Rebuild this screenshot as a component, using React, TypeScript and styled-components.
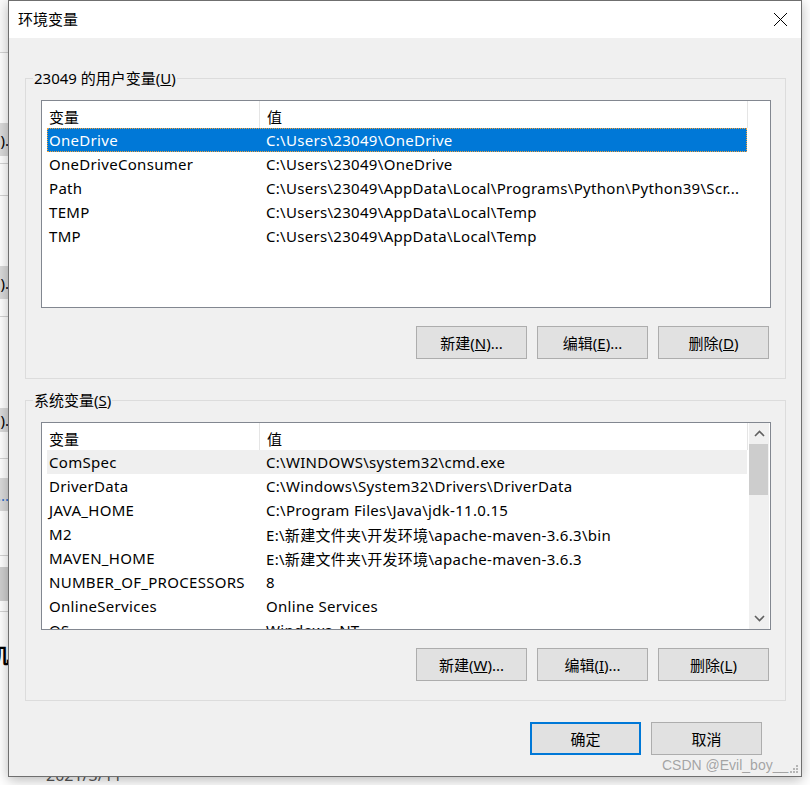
import React from "react";
import styled, { createGlobalStyle } from "styled-components";

const UI_FONT = `"Noto Sans", "Noto Sans CJK SC", sans-serif`;

const GlobalStyle = createGlobalStyle`
  html, body {
    margin: 0;
    padding: 0;
    background: #ffffff;
  }
  body {
    font-family: ${UI_FONT};
    font-size: 15px;
    color: #000;
  }
  * { box-sizing: border-box; }
`;

const Desktop = styled.div`
  position: relative;
  width: 810px;
  height: 785px;
  overflow: hidden;
  display: flex;
  align-items: flex-start;
  background: #ffffff;
`;

const BackStrip = styled.div`
  width: 8px;
  flex: none;
  height: 785px;
  display: flex;
  flex-direction: column;
  overflow: hidden;
  background: #ffffff;
`;

const StripPiece = styled.div<{ $h: number; $bg?: string; $line?: boolean }>`
  height: ${(p) => p.$h}px;
  flex: none;
  background: ${(p) => p.$bg || "#fbfbfb"};
  border-bottom: ${(p) => (p.$line ? "1px solid #d4d4d4" : "none")};
  display: flex;
  align-items: center;
  justify-content: flex-end;
  white-space: nowrap;
  font-size: 15px;
  color: #000;
  overflow: hidden;
`;

const StripGlyph = styled.span<{ $bold?: boolean; $blue?: boolean }>`
  font-weight: ${(p) => (p.$bold ? 700 : 400)};
  font-size: ${(p) => (p.$bold ? "21px" : "15px")};
  color: ${(p) => (p.$blue ? "#2a6ccf" : "#000")};
  margin-right: -1px;
`;

const BehindDate = styled.div`
  position: absolute;
  left: 46px;
  top: 764px;
  font-size: 16px;
  color: #555;
  z-index: 0;
`;

const Dialog = styled.div`
  position: relative;
  z-index: 1;
  width: 794px;
  height: 777px;
  flex: none;
  border: 1px solid #6f6f6f;
  background: #f0f0f0;
  box-shadow: 0 3px 12px rgba(0, 0, 0, 0.28);
  display: flex;
  flex-direction: column;
`;

const TitleBar = styled.div`
  height: 37px;
  flex: none;
  background: #ffffff;
  display: flex;
  align-items: center;
  justify-content: space-between;
  padding: 0 13px 0 9px;
`;

const Title = styled.div`
  font-size: 15px;
  line-height: 20px;
  margin-top: -1px;
`;

const Body = styled.div`
  display: flex;
  flex-direction: column;
  padding: 40px 15px 19px 16px;
`;

const GroupBox = styled.div<{ $gap?: number }>`
  border: 1px solid #dcdcdc;
  display: flex;
  flex-direction: column;
  padding: 0 14px 19px 15px;
  margin-bottom: ${(p) => p.$gap || 0}px;
`;

const Legend = styled.div`
  align-self: flex-start;
  margin-top: -11px;
  margin-left: -8px;
  padding: 0 1px;
  line-height: 20px;
  background: #f0f0f0;
  font-size: 15px;
`;

const ListView = styled.div`
  margin-top: 12px;
  height: 208px;
  border: 1px solid #828790;
  background: #ffffff;
  display: flex;
  overflow: hidden;
`;

const ListContent = styled.div`
  width: 706px;
  flex: none;
  display: flex;
  flex-direction: column;
  overflow: hidden;
`;

const Header = styled.div`
  height: 27px;
  flex: none;
  display: flex;
`;

const HeaderCell = styled.div<{ $w: number }>`
  width: ${(p) => p.$w}px;
  flex: none;
  border-right: 1px solid #e5e5e5;
  padding-left: 7px;
  padding-top: 3px;
  display: flex;
  align-items: center;
  font-size: 15px;
`;

const Row = styled.div<{ $state?: "selected" | "hover" }>`
  height: 24px;
  flex: none;
  width: 700px;
  margin-left: 5px;
  display: flex;
  align-items: center;
  white-space: nowrap;
  letter-spacing: 0.3px;
  background: ${(p) =>
    p.$state === "selected" ? "#0078d7" : p.$state === "hover" ? "#efefef" : "transparent"};
  color: ${(p) => (p.$state === "selected" ? "#ffffff" : "#000")};
  outline: ${(p) => (p.$state === "selected" ? "1px dotted #f3a13a" : "none")};
  outline-offset: -1px;
`;

const NameCell = styled.div`
  width: 212px;
  flex: none;
  padding-left: 2px;
  overflow: hidden;
`;

const ValueCell = styled.div`
  flex: none;
  padding-left: 7px;
`;

const ScrollBar = styled.div`
  width: 20px;
  flex: none;
  margin-left: 1px;
  background: #f0f0f0;
  display: flex;
  flex-direction: column;
`;

const ScrollArrow = styled.div`
  height: 21px;
  flex: none;
  display: flex;
  align-items: center;
  justify-content: center;
`;

const ScrollThumb = styled.div`
  height: 51px;
  flex: none;
  margin: 0 1px 0 0;
  background: #cdcdcd;
`;

const ScrollTrack = styled.div`
  flex: 1;
`;

const ButtonRow = styled.div<{ $top: number; $right: number }>`
  display: flex;
  justify-content: flex-end;
  gap: 10px;
  margin-top: ${(p) => p.$top}px;
  padding-right: ${(p) => p.$right}px;
`;

const Button = styled.div<{ $default?: boolean }>`
  width: 111px;
  height: 33px;
  flex: none;
  background: #e1e1e1;
  border: ${(p) => (p.$default ? "2px solid #0078d7" : "1px solid #adadad")};
  display: flex;
  align-items: center;
  justify-content: center;
  font-size: 15px;
  color: #000;
  white-space: nowrap;
`;

const Watermark = styled.div`
  position: absolute;
  left: 653px;
  top: 756px;
  font-family: "Liberation Sans", Arial, sans-serif;
  font-size: 14px;
  line-height: 16px;
  color: rgba(150, 150, 150, 0.85);
  white-space: nowrap;
  display: flex;
  align-items: flex-end;
  gap: 1px;
`;

const Chevron = ({ dir }: { dir: "up" | "down" }) => (
  <svg width="11" height="7" viewBox="0 0 11 7">
    <polyline
      points={dir === "up" ? "1,6 5.5,1.5 10,6" : "1,1 5.5,5.5 10,1"}
      fill="none"
      stroke="#606060"
      strokeWidth="1.6"
    />
  </svg>
);

const CloseIcon = () => (
  <svg width="15" height="15" viewBox="0 0 15 15">
    <line x1="1" y1="1" x2="14" y2="14" stroke="#000" strokeWidth="1" />
    <line x1="14" y1="1" x2="1" y2="14" stroke="#000" strokeWidth="1" />
  </svg>
);

const Grip = () => (
  <svg width="9" height="9" viewBox="0 0 9 9">
    {[
      [7, 1],
      [7, 4],
      [4, 4],
      [7, 7],
      [4, 7],
      [1, 7],
    ].map(([x, y], i) => (
      <rect key={i} x={x} y={y} width="2" height="2" fill="#b5b5b5" />
    ))}
  </svg>
);

type Item = { name: string; value: string; state?: "selected" | "hover" };

const userVars: Item[] = [
  { name: "OneDrive", value: "C:\\Users\\23049\\OneDrive", state: "selected" },
  { name: "OneDriveConsumer", value: "C:\\Users\\23049\\OneDrive" },
  { name: "Path", value: "C:\\Users\\23049\\AppData\\Local\\Programs\\Python\\Python39\\Scr..." },
  { name: "TEMP", value: "C:\\Users\\23049\\AppData\\Local\\Temp" },
  { name: "TMP", value: "C:\\Users\\23049\\AppData\\Local\\Temp" },
];

const sysVars: Item[] = [
  { name: "ComSpec", value: "C:\\WINDOWS\\system32\\cmd.exe", state: "hover" },
  { name: "DriverData", value: "C:\\Windows\\System32\\Drivers\\DriverData" },
  { name: "JAVA_HOME", value: "C:\\Program Files\\Java\\jdk-11.0.15" },
  { name: "M2", value: "E:\\新建文件夹\\开发环境\\apache-maven-3.6.3\\bin" },
  { name: "MAVEN_HOME", value: "E:\\新建文件夹\\开发环境\\apache-maven-3.6.3" },
  { name: "NUMBER_OF_PROCESSORS", value: "8" },
  { name: "OnlineServices", value: "Online Services" },
  { name: "OS", value: "Windows_NT" },
];

const VarList = ({ items, scroll }: { items: Item[]; scroll?: boolean }) => (
  <ListView>
    <ListContent>
      <Header>
        <HeaderCell $w={218}>变量</HeaderCell>
        <HeaderCell $w={488}>值</HeaderCell>
      </Header>
      {items.map((it) => (
        <Row key={it.name} $state={it.state}>
          <NameCell>{it.name}</NameCell>
          <ValueCell>{it.value}</ValueCell>
        </Row>
      ))}
    </ListContent>
    {scroll && (
      <ScrollBar>
        <ScrollArrow>
          <Chevron dir="up" />
        </ScrollArrow>
        <ScrollThumb />
        <ScrollTrack />
        <ScrollArrow>
          <Chevron dir="down" />
        </ScrollArrow>
      </ScrollBar>
    )}
  </ListView>
);

export default function App() {
  return (
    <>
      <GlobalStyle />
      <Desktop>
        <BackStrip>
          <StripPiece $h={53} $line />
          <StripPiece $h={70} $bg="#ffffff" />
          <StripPiece $h={33} $bg="#dadada">
            <StripGlyph>).</StripGlyph>
          </StripPiece>
          <StripPiece $h={8} $bg="#ffffff" $line />
          <StripPiece $h={32} $bg="#ffffff" $line />
          <StripPiece $h={70} $bg="#ffffff" />
          <StripPiece $h={33} $bg="#dadada">
            <StripGlyph>).</StripGlyph>
          </StripPiece>
          <StripPiece $h={18} $bg="#ffffff" $line />
          <StripPiece $h={91} $bg="#ffffff" />
          <StripPiece $h={24} $bg="#dadada">
            <StripGlyph>).</StripGlyph>
          </StripPiece>
          <StripPiece $h={27} $bg="#ffffff" $line />
          <StripPiece $h={19} $bg="#ffffff" />
          <StripPiece $h={33} $bg="#dadada">
            <StripGlyph $blue>....</StripGlyph>
          </StripPiece>
          <StripPiece $h={45} $bg="#ffffff" $line />
          <StripPiece $h={11} $bg="#ffffff" />
          <StripPiece $h={34} $bg="#cfcfcf" />
          <StripPiece $h={11} $bg="#ffffff" $line />
          <StripPiece $h={30} $bg="#ffffff" />
          <StripPiece $h={24} $bg="#ffffff">
            <StripGlyph $bold>机</StripGlyph>
          </StripPiece>
          <StripPiece $h={120} $bg="#ffffff" />
        </BackStrip>
        <BehindDate>2021/3/11</BehindDate>
        <Dialog>
          <TitleBar>
            <Title>环境变量</Title>
            <CloseIcon />
          </TitleBar>
          <Body>
            <GroupBox $gap={21}>
              <Legend>
                23049 的用户变量(<u>U</u>)
              </Legend>
              <VarList items={userVars} />
              <ButtonRow $top={18} $right={2}>
                <Button>
                  新建(<u>N</u>)...
                </Button>
                <Button>
                  编辑(<u>E</u>)...
                </Button>
                <Button>
                  删除(<u>D</u>)
                </Button>
              </ButtonRow>
            </GroupBox>
            <GroupBox>
              <Legend>
                系统变量(<u>S</u>)
              </Legend>
              <VarList items={sysVars} scroll />
              <ButtonRow $top={18} $right={2}>
                <Button>
                  新建(<u>W</u>)...
                </Button>
                <Button>
                  编辑(<u>I</u>)...
                </Button>
                <Button>
                  删除(<u>L</u>)
                </Button>
              </ButtonRow>
            </GroupBox>
            <ButtonRow $top={21} $right={24}>
              <Button $default>确定</Button>
              <Button>取消</Button>
            </ButtonRow>
          </Body>
          <Watermark>
            <span>CSDN @Evil_boy__</span>
            <Grip />
          </Watermark>
        </Dialog>
      </Desktop>
    </>
  );
}
